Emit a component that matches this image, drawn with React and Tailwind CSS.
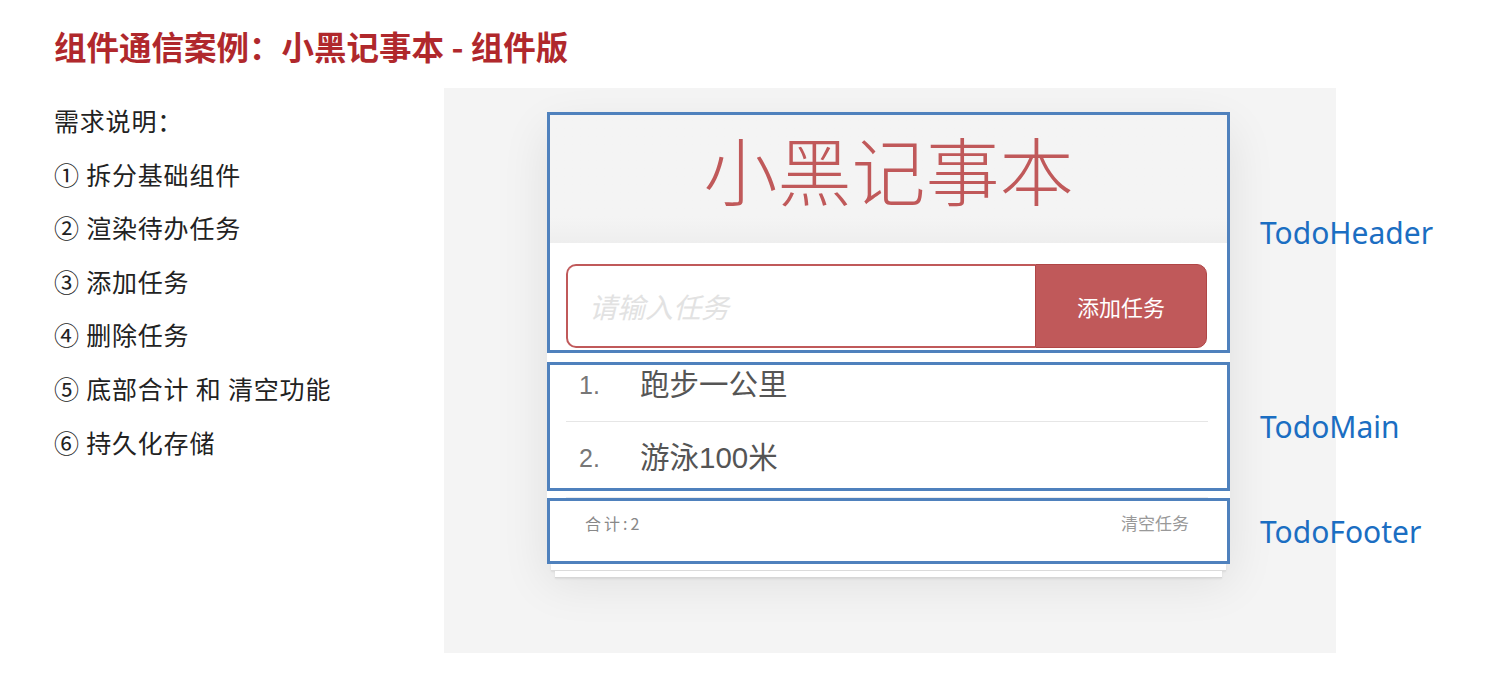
const requirements = [
  '需求说明：',
  '① 拆分基础组件',
  '② 渲染待办任务',
  '③ 添加任务',
  '④ 删除任务',
  '⑤ 底部合计 和 清空功能',
  '⑥ 持久化存储',
]

const todos = [
  { id: 1, name: '跑步一公里' },
  { id: 2, name: '游泳100米' },
]

const cjk = { fontFamily: '"Noto Sans CJK SC", "Noto Sans", sans-serif' }
const mixed = { fontFamily: '"Liberation Sans", "Noto Sans CJK SC", sans-serif' }

function TodoHeader() {
  return (
    <div className="h-[241px] border-[3px] border-[#4f81bd] flex flex-col">
      <div className="h-[128px] pt-[16px] bg-gradient-to-b from-[#f4f4f4] from-80% to-[#eeeeee] text-center">
        <h1 className="text-[74px] leading-[74px] font-light text-[#c0595a]" style={cjk}>
          小黑记事本
        </h1>
      </div>
      <div className="pt-[21px] pl-[16px]">
        <div className="flex w-[641px] h-[84px]">
          <div className="flex-1 flex items-center pl-[21px] border-2 border-r-0 border-[#c0595a] rounded-l-[10px] bg-white">
            <span className="text-[28px] italic text-[#e2e2e2]" style={cjk}>
              请输入任务
            </span>
          </div>
          <button className="w-[172px] flex items-center justify-center bg-[#c0595a] border border-[#b04646] rounded-r-[10px] text-white text-[22px]" style={cjk}>
            添加任务
          </button>
        </div>
      </div>
    </div>
  )
}

function TodoMain() {
  return (
    <div className="mt-[9px] h-[129px] border-[3px] border-[#4f81bd]">
      <ul className="pl-[16px] pr-[19px]">
        {todos.map((item, index) => (
          <li
            key={item.id}
            className={
              index === 0
                ? 'h-[57px] flex items-start border-b border-[#e6e6e6]'
                : 'h-[66px] flex items-start pt-[16px]'
            }
          >
            <span className="w-[74px] shrink-0 pl-[13px] text-[25px] leading-[40px] text-[#777]" style={mixed}>
              {index + 1}.
            </span>
            <span className="text-[29.5px] leading-[40px] text-[#555]" style={mixed}>
              {item.name}
            </span>
          </li>
        ))}
      </ul>
    </div>
  )
}

function TodoFooter() {
  return (
    <div className="h-[66px] border-[3px] border-[#4f81bd] flex justify-between items-start pt-[12px] pl-[35px] pr-[38px]">
      <span className="text-[16px] leading-[20px] tracking-[3px] text-[#888]" style={cjk}>
        合计:{todos.length}
      </span>
      <span className="text-[17px] leading-[20px] text-[#999]" style={cjk}>
        清空任务
      </span>
    </div>
  )
}

export default function App() {
  return (
    <div className="w-[1503px] h-[690px] bg-white overflow-hidden" style={cjk}>
      <h2 className="pt-[26px] pl-[54px] text-[32.5px] leading-[40px] font-bold text-[#b0282c]">
        组件通信案例：小黑记事本 - 组件版
      </h2>

      <div className="mt-[22px] flex">
        <ul className="w-[444px] shrink-0 pl-[54px] pt-[6px] text-[25px] leading-[53.6px] tracking-[0.8px] text-[#222]">
          {requirements.map((text) => (
            <li key={text}>{text}</li>
          ))}
        </ul>

        <div className="w-[892px] h-[565px] shrink-0 bg-[#f4f4f4] pt-[24px] pl-[103px] flex">
          <div className="w-[683px] shrink-0">
            <div className="bg-white shadow-[0_18px_45px_rgba(0,0,0,0.09)]">
              <TodoHeader />
              <TodoMain />
              <div className="h-[7px] flex items-end pl-[19px] pr-[22px]">
                <div className="w-full h-px bg-[#ececec]" />
              </div>
              <TodoFooter />
            </div>
            <div className="mx-[4px] h-[7px] bg-white border-b border-[#dcdcdc] shadow-[0_1px_2px_rgba(0,0,0,0.08)]" />
            <div className="mx-[8px] h-[7px] bg-white border-b border-[#d6d6d6] shadow-[0_1px_2px_rgba(0,0,0,0.08)]" />
          </div>

          <div className="ml-[30px] shrink-0 flex flex-col text-[30px] text-[#1b6ec2] whitespace-nowrap" style={{ fontFamily: '"Noto Sans", sans-serif' }}>
            <div className="h-[241px] flex items-center">TodoHeader</div>
            <div className="mt-[9px] h-[129px] flex items-center">TodoMain</div>
            <div className="mt-[7px] h-[66px] flex items-center">TodoFooter</div>
          </div>
        </div>
      </div>
    </div>
  )
}
